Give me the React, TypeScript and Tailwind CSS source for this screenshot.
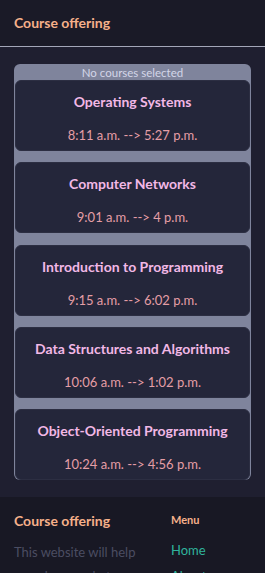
import React from "react";

const courses = [
  { name: "Operating Systems", time: "8:11 a.m. --> 5:27 p.m." },
  { name: "Computer Networks", time: "9:01 a.m. --> 4 p.m." },
  { name: "Introduction to Programming", time: "9:15 a.m. --> 6:02 p.m." },
  { name: "Data Structures and Algorithms", time: "10:06 a.m. --> 1:02 p.m." },
  { name: "Object-Oriented Programming", time: "10:24 a.m. --> 4:56 p.m." },
];

export default function App() {
  return (
    <div className="min-h-screen bg-[#1e1e2e]" style={{ fontFamily: 'Lato, "Noto Sans", sans-serif' }}>
      <header className="h-[47px] bg-[#1a1a27] border-b border-[#a3a6b8] flex items-center px-[14px]">
        <h1 className="text-[14px] font-bold text-[#f5b08a] leading-none pb-[1px]">Course offering</h1>
      </header>
      <main className="bg-[#1f1f30] px-[14px] pt-[17px] pb-[17px]">
        <div className="rounded-md bg-[#7f849c] flex flex-col">
          <div className="h-[16px] flex items-center justify-center text-[11.5px] text-[#d3d6e8] leading-none pt-[1px]">
            No courses selected
          </div>
          <div className="flex flex-col gap-[11.25px]">
            {courses.map((c) => (
              <div
                key={c.name}
                className="mx-[1px] h-[71px] rounded-md bg-[#24263a] border border-[#2c2e42] flex flex-col items-center"
              >
                <div className="mt-[11px] text-[14px] font-bold text-[#f2b8e6] leading-[20px]">{c.name}</div>
                <div className="mt-[13px] text-[13px] text-[#e59ea6] leading-[20px]">{c.time}</div>
              </div>
            ))}
          </div>
        </div>
      </main>
      <footer className="bg-[#181824] flex pt-[14px] pb-[20px]">
        <div className="w-[171px] pl-[14px] pr-[20px]">
          <div className="text-[14px] font-bold text-[#f5b08a] leading-[20px]">Course offering</div>
          <p className="mt-[9px] w-[125px] text-[13px] text-[#4b4d62] leading-[24px]">
            This website will help you choose what courses to take.
          </p>
        </div>
        <div className="flex-1">
          <div className="mt-[1px] text-[11px] font-bold text-[#f5b08a] leading-[16px]">Menu</div>
          <ul className="mt-[14px] flex flex-col gap-[10px] text-[13px] text-[#2fb39c] leading-[16px]">
            <li>Home</li>
            <li>About</li>
            <li>Contact</li>
          </ul>
        </div>
      </footer>
    </div>
  );
}
